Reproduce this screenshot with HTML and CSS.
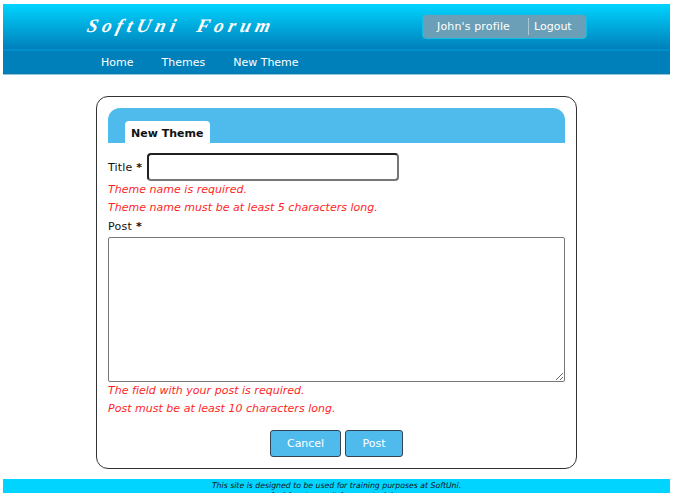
FILE: index.html
```
<!DOCTYPE html>
<html lang="en">
<head>
<meta charset="utf-8">
<title>SoftUni Forum</title>
<link rel="stylesheet" href="styles.css">
</head>
<body>
<div class="page">
  <header class="top">
    <div class="logo">SoftUni Forum</div>
    <div class="user"><a class="profile">John's profile</a><a class="logout">Logout</a></div>
  </header>
  <nav class="nav"><a>Home</a><a>Themes</a><a>New Theme</a></nav>
  <main class="card">
    <div class="banner"><h2 class="tab">New Theme</h2></div>
    <form class="form">
      <div class="title-row"><label>Title <b>*</b></label><input class="title-input" type="text"></div>
      <p class="error">Theme name is required.</p>
      <p class="error">Theme name must be at least 5 characters long.</p>
      <label class="post-label">Post <b>*</b></label>
      <textarea class="post"></textarea>
      <p class="error">The field with your post is required.</p>
      <p class="error">Post must be at least 10 characters long.</p>
      <div class="buttons"><button type="button" class="cancel">Cancel</button><button type="button" class="submit">Post</button></div>
    </form>
  </main>
  <footer class="footer"><p>This site is designed to be used for training purposes at SoftUni.</p><p>feel free to use it for your training</p></footer>
</div>
</body>
</html>
```
FILE: styles.css
```
* { box-sizing: border-box; }
body { margin: 0; background: #fff; color: #111; font-family: "DejaVu Sans", Verdana, sans-serif; font-size: 11px; }
p, h2 { margin: 0; }
.page { width: 667px; height: 489px; margin: 4px 0 0 3px; overflow: hidden; display: flex; flex-direction: column; }
.top { height: 47px; flex: none; display: flex; justify-content: space-between; padding: 10px 83px 0; background: linear-gradient(#00d4ff, #0080ba); border-bottom: 2px solid #008fcd; }
.logo { color: #fff; font: italic 700 19px/24px "Z003", "URW Chancery L", "Liberation Serif", serif; letter-spacing: 4.5px; word-spacing: 8px; white-space: nowrap; transform: skewX(-14deg); }
.user { display: flex; align-items: center; width: 165px; height: 25px; padding-left: 14px; background: #6a9fb7; border: 1px solid #13bce5; border-radius: 4px; color: #fff; white-space: nowrap; }
.profile { width: 91px; letter-spacing: 0.15px; }
.logout { height: 17px; line-height: 17px; padding-left: 5px; border-left: 1px solid #aac8d5; }
.nav { height: 23px; flex: none; display: flex; gap: 28px; padding-left: 98px; line-height: 24px; background: #0080ba; border-bottom: 1px solid #0878ad; box-shadow: 0 1px #8cc8e2; color: #fff; }
.card { width: 481px; height: 373px; flex: none; margin: 22px 0 10px 93px; padding: 11px; border: 1px solid #333; border-radius: 12px; }
.banner { height: 35px; display: flex; align-items: flex-end; padding-left: 17px; background: #4fbbed; border-radius: 12px 12px 0 0; }
.tab { width: 85px; height: 22px; padding-left: 6px; line-height: 26px; font-size: 11px; background: #fff; border-radius: 4px 4px 0 0; white-space: nowrap; }
.form { display: flex; flex-direction: column; }
.title-row { display: flex; align-items: center; height: 28px; margin-top: 10px; }
.title-row label { width: 39px; white-space: nowrap; letter-spacing: 0.2px; }
.title-input { width: 252px; height: 28px; border: 2px inset #767676; border-radius: 4px; }
.error { color: #ff1f26; font-style: italic; height: 18px; line-height: 18px; white-space: nowrap; letter-spacing: 0.02px; }
.post-label { height: 20px; line-height: 20px; letter-spacing: 0.3px; }
.post { display: block; width: 457px; height: 145px; border: 1px solid #777; border-radius: 2px; }
.buttons { display: flex; justify-content: center; gap: 4px; margin-top: 12px; }
.buttons button { height: 27px; padding: 0; background: #4fbbed; border: 1px solid #345; border-radius: 3px; color: #fff; font: inherit; letter-spacing: -0.05px; }
.buttons .cancel { width: 71px; }
.buttons .submit { width: 58px; }
.footer { flex: 1; min-height: 0; overflow: hidden; background: #00d4ff; padding-top: 2px; font-size: 7.75px; font-style: italic; text-align: center; line-height: 10px; }
```
